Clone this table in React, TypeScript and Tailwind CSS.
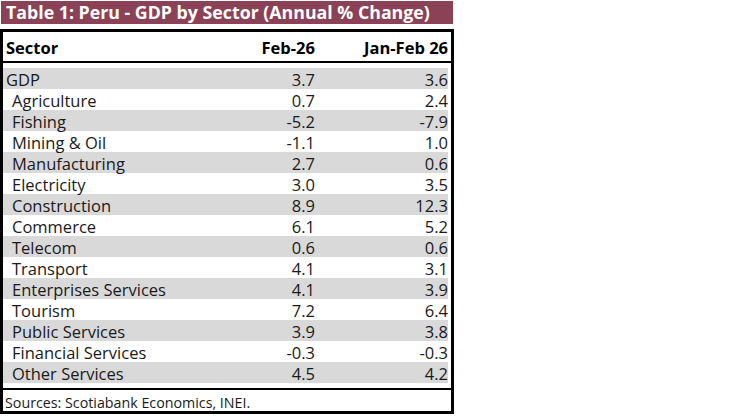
const rows: [string, string, string, boolean][] = [
  ["GDP", "3.7", "3.6", false],
  ["Agriculture", "0.7", "2.4", true],
  ["Fishing", "-5.2", "-7.9", true],
  ["Mining & Oil", "-1.1", "1.0", true],
  ["Manufacturing", "2.7", "0.6", true],
  ["Electricity", "3.0", "3.5", true],
  ["Construction", "8.9", "12.3", true],
  ["Commerce", "6.1", "5.2", true],
  ["Telecom", "0.6", "0.6", true],
  ["Transport", "4.1", "3.1", true],
  ["Enterprises Services", "4.1", "3.9", true],
  ["Tourism", "7.2", "6.4", true],
  ["Public Services", "3.9", "3.8", true],
  ["Financial Services", "-0.3", "-0.3", true],
  ["Other Services", "4.5", "4.2", true],
]

export default function App() {
  return (
    <div className="w-[748px] h-[419px] bg-white font-['Open_Sans',sans-serif] text-black">
      <div className="w-[454px] pt-px">
        <div className="ml-px w-[452px] h-[23px] bg-[#8b4256] text-white font-bold text-[17.75px] leading-[23px] pl-[5px] whitespace-nowrap">
          Table 1: Peru - GDP by Sector (Annual % Change)
        </div>
        <div className="mt-[5px] border-[3px] border-black">
          <div className="grid grid-cols-[1fr_120px_133px] mr-[3px] h-[29px] items-center font-bold text-[16.5px] pt-[4px]">
            <div className="pl-[3px]">Sector</div>
            <div className="text-right">Feb-26</div>
            <div className="text-right">Jan-Feb 26</div>
          </div>
          <div className="border-t-2 border-black pt-[5px] pb-[5px]">
            {rows.map(([name, feb, jan, indent], i) => (
              <div
                key={name}
                className={`grid grid-cols-[1fr_120px_133px] mr-[3px] h-[21px] text-[16.5px] leading-[18px] pt-[3px] text-[#1a1a1a] ${
                  i % 2 === 0 ? "bg-[#d9d9d9]" : "bg-white"
                }`}
              >
                <div className={indent ? "pl-[9px]" : "pl-[3px]"}>{name}</div>
                <div className="text-right">{feb}</div>
                <div className="text-right">{jan}</div>
              </div>
            ))}
          </div>
          <div className="border-t-2 border-black h-[23px] pl-[2px] text-[14.25px] leading-[18px] pt-[4px] text-[#1a1a1a]">
            Sources: Scotiabank Economics, INEI.
          </div>
        </div>
      </div>
    </div>
  )
}
